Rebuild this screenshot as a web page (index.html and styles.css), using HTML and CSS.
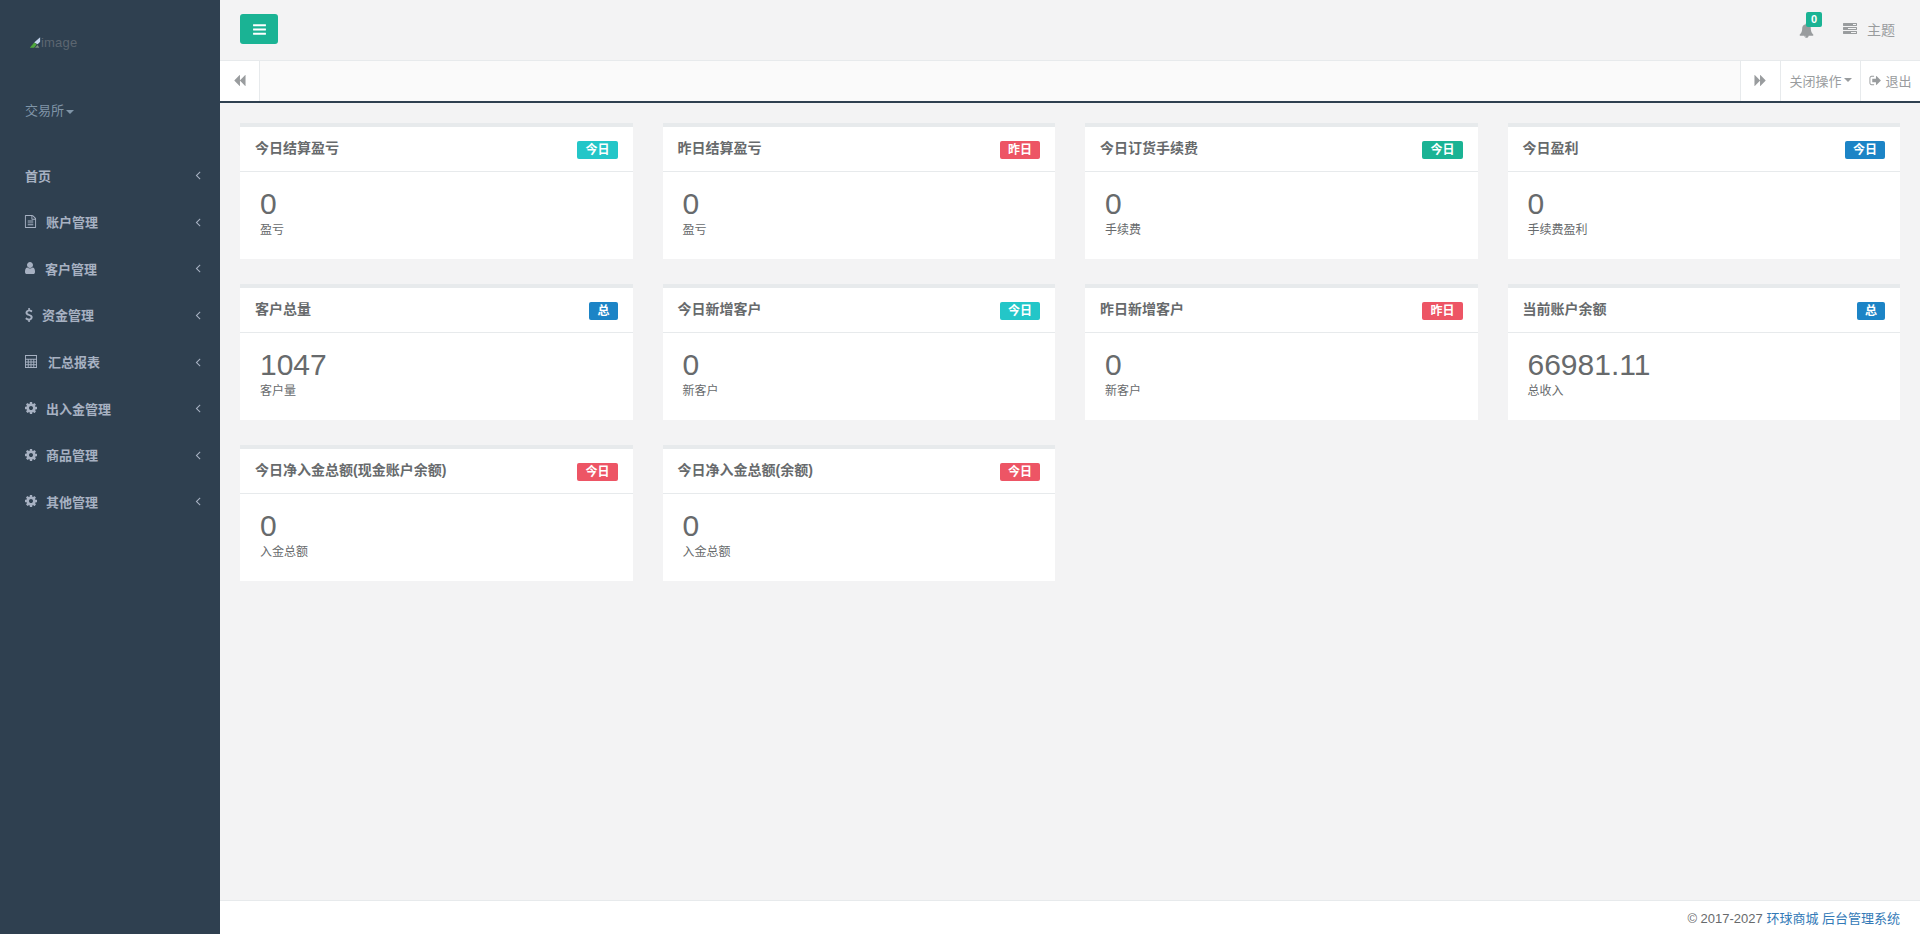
FILE: index.html
```html
<!DOCTYPE html>
<html lang="zh-CN">
<head>
<meta charset="utf-8">
<title>后台管理系统</title>
<link rel="stylesheet" href="styles.css">
</head>
<body>
<svg class="defs" xmlns="http://www.w3.org/2000/svg">
<symbol id="i-bars" viewBox="0 0 1792 1792"><path d="M1664 1344v128q0 26-19 45t-45 19h-1408q-26 0-45-19t-19-45v-128q0-26 19-45t45-19h1408q26 0 45 19t19 45zm0-512v128q0 26-19 45t-45 19h-1408q-26 0-45-19t-19-45v-128q0-26 19-45t45-19h1408q26 0 45 19t19 45zm0-512v128q0 26-19 45t-45 19h-1408q-26 0-45-19t-19-45v-128q0-26 19-45t45-19h1408q26 0 45 19t19 45z"/></symbol>
<symbol id="i-user" viewBox="0 0 1792 1792"><path d="M1536 1399q0 109-62.5 187t-150.5 78h-854q-88 0-150.5-78t-62.5-187q0-85 8.5-160.5t31.5-152 58.5-131 94-89 134.5-34.5q131 128 313 128t313-128q76 0 134.5 34.5t94 89 58.5 131 31.5 152 8.5 160.5zm-256-887q0 159-112.5 271.5t-271.5 112.5-271.5-112.5-112.5-271.5 112.5-271.5 271.5-112.5 271.5 112.5 112.5 271.5z"/></symbol>
<symbol id="i-bell" viewBox="0 0 1792 1792"><path d="M912 1696q0-16-16-16-59 0-101.5-42.5t-42.5-101.5q0-16-16-16t-16 16q0 73 51.5 124.5t124.5 51.5q16 0 16-16zm816-288q0 52-38 90t-90 38h-448q0 106-75 181t-181 75-181-75-75-181h-448q-52 0-90-38t-38-90q50-42 91-88t85-119.5 74.5-158.5 50-206 19.5-260q0-152 117-282.5t307-158.5q-8-19-8-39 0-40 28-68t68-28 68 28 28 68q0 20-8 39 190 28 307 158.5t117 282.5q0 139 19.5 260t50 206 74.5 158.5 85 119.5 91 88z"/></symbol>
<symbol id="i-cog" viewBox="0 0 1792 1792"><path d="M1152 896q0-106-75-181t-181-75-181 75-75 181 75 181 181 75 181-75 75-181zm512-109v222q0 12-8 23t-20 13l-185 28q-19 54-39 91 35 50 107 138 10 12 10 25t-9 23q-27 37-99 108t-94 71q-12 0-26-9l-138-108q-44 23-91 38-16 136-29 186-7 28-36 28h-222q-14 0-24.5-8.5t-11.5-21.5l-28-184q-49-16-90-37l-141 107q-10 9-25 9-14 0-25-11-126-114-165-168-7-10-7-23 0-12 8-23 15-21 51-66.5t54-70.5q-27-50-41-99l-183-27q-13-2-21-12.5t-8-23.5v-222q0-12 8-23t19-13l186-28q14-46 39-92-40-57-107-138-10-12-10-24 0-10 9-23 26-36 98.5-107.5t94.5-71.5q13 0 26 10l138 107q44-23 91-38 16-136 29-186 7-28 36-28h222q14 0 24.5 8.5t11.5 21.5l28 184q49 16 90 37l142-107q9-9 24-9 13 0 25 10 129 119 165 170 7 8 7 22 0 12-8 23-15 21-51 66.5t-54 70.5q26 50 41 98l183 28q13 2 21 12.5t8 23.5z"/></symbol>
<symbol id="i-angle" viewBox="0 0 1792 1792"><path d="M1203 544q0 13-10 23l-393 393 393 393q10 10 10 23t-10 23l-50 50q-10 10-23 10t-23-10l-466-466q-10-10-10-23t10-23l466-466q10-10 23-10t23 10l50 50q10 10 10 23z"/></symbol>
<symbol id="i-back" viewBox="0 0 1792 1792"><path d="M1683 141q19-19 32-13t13 32v1472q0 26-13 32t-32-13l-710-710q-9-9-13-19v710q0 26-13 32t-32-13l-710-710q-19-19-19-45t19-45l710-710q19-19 32-13t13 32v710q4-10 13-19z"/></symbol>
<symbol id="i-forward" viewBox="0 0 1792 1792"><path d="M109 1651q-19 19-32 13t-13-32v-1472q0-26 13-32t32 13l710 710q9 9 13 19v-710q0-26 13-32t32 13l710 710q19 19 19 45t-19 45l-710 710q-19 19-32 13t-13-32v-710q-4 10-13 19z"/></symbol>
<symbol id="i-signout" viewBox="0 0 1792 1792"><path d="M704 1440q0 4 1 20t.5 26.5-3 23.5-10 19.5-20.5 6.5h-320q-119 0-203.5-84.5t-84.5-203.5v-704q0-119 84.5-203.5t203.5-84.5h320q13 0 22.5 9.5t9.5 22.5q0 4 1 20t.5 26.5-3 23.5-10 19.5-20.5 6.5h-320q-66 0-113 47t-47 113v704q0 66 47 113t113 47h312l11.5 1 11.5 3 8 5.5 7 9 2 13.5zm928-544q0 26-19 45l-544 544q-19 19-45 19t-45-19-19-45v-288h-448q-26 0-45-19t-19-45v-384q0-26 19-45t45-19h448v-288q0-26 19-45t45-19 45 19l544 544q19 19 19 45z"/></symbol>
<symbol id="i-tasks" viewBox="0 0 1792 1792"><path d="M1024 1408h640v-128h-640v128zm-384-512h1024v-128h-1024v128zm640-512h384v-128h-384v128zm512 832v256q0 26-19 45t-45 19h-1664q-26 0-45-19t-19-45v-256q0-26 19-45t45-19h1664q26 0 45 19t19 45zm0-512v256q0 26-19 45t-45 19h-1664q-26 0-45-19t-19-45v-256q0-26 19-45t45-19h1664q26 0 45 19t19 45zm0-512v256q0 26-19 45t-45 19h-1664q-26 0-45-19t-19-45v-256q0-26 19-45t45-19h1664q26 0 45 19t19 45z"/></symbol>
<symbol id="i-usd" viewBox="0 0 1792 1792"><path d="M1362 1185q0 153-99.5 263.5t-258.5 136.5v175q0 14-9 23t-23 9h-135q-13 0-22.5-9.5t-9.5-22.5v-175q-66-9-127.5-31t-101.5-44.5-74-48-46.5-37.5-17.5-18q-17-21-2-41l103-135q7-10 23-12 15-2 24 9l2 2q113 99 243 125 37 8 74 8 81 0 142.5-43t61.5-122q0-28-15-53t-33.5-42-58.5-37.5-66-32-80-32.5q-39-16-61.5-25t-61.5-26.5-62.5-31-56.5-35.5-53.5-42.5-43.5-49-35.5-58-21-66.5-8.5-78q0-138 98-242t255-134v-180q0-13 9.5-22.5t22.5-9.5h135q14 0 23 9t9 23v176q57 6 110.5 23t87 33.5 63.5 37.5 39 29 15 14q17 18 5 38l-81 146q-8 15-23 16-14 3-27-7-3-3-14.5-12t-39-26.5-58.5-32-74.5-26-85.5-11.5q-95 0-155 43t-60 111q0 26 8.5 48t29.5 41.5 39.5 33 56 31 60.5 27 70 27.5q53 20 81 31.5t76 35 75.5 42.5 62 50 53 63.5 31.5 76.5 13 94z"/></symbol>
<symbol id="i-file" viewBox="0 0 1792 1792"><path d="M1596 380q28 28 48 76t20 88v1152q0 40-28 68t-68 28h-1344q-40 0-68-28t-28-68v-1600q0-40 28-68t68-28h896q40 0 88 20t76 48zm-444-244v376h376q-10-29-22-41l-313-313q-12-12-41-22zm384 1528v-1024h-416q-40 0-68-28t-28-68v-416h-768v1536h1280zm-1024-864q0-14 9-23t23-9h704q14 0 23 9t9 23v64q0 14-9 23t-23 9h-704q-14 0-23-9t-9-23v-64zm736 224q14 0 23 9t9 23v64q0 14-9 23t-23 9h-704q-14 0-23-9t-9-23v-64q0-14 9-23t23-9h704zm0 256q14 0 23 9t9 23v64q0 14-9 23t-23 9h-704q-14 0-23-9t-9-23v-64q0-14 9-23t23-9h704z"/></symbol>
<symbol id="i-calc" viewBox="0 0 13 14"><path fill-rule="evenodd" d="M0 0h13v14H0zM1 1v3h11V1zM1 5v2h2V5zm3 0v2h2V5zm3 0v2h2V5zm3 0v2h2V5zM1 8v2h2V8zm3 0v2h2V8zm3 0v2h2V8zm3 0v2h2V8zM1 11v2h2v-2zm3 0v2h2v-2zm3 0v2h2v-2zm3 0v2h2v-2z"/></symbol>
</svg>

<div class="app">
  <aside class="sidebar">
    <div class="logo">
      <svg class="broken" viewBox="0 0 14 14" xmlns="http://www.w3.org/2000/svg"><path fill="#c8d6ee" d="M13 1v5L10 9 6 7z"/><path fill="#4fa83d" d="M1 13l5-6 3 2-3 4z"/><path fill="#7d8f7e" d="M7 13l3-3 2 3z"/></svg><span class="logo-alt">image</span>
    </div>
    <div class="profile">交易所<span class="caret"></span></div>
    <nav class="menu">
      <a class="menu-item"><span class="menu-label">首页</span><svg class="chev"><use href="#i-angle"/></svg></a>
      <a class="menu-item"><span class="menu-label"><svg class="ico ico-file"><use href="#i-file"/></svg>账户管理</span><svg class="chev"><use href="#i-angle"/></svg></a>
      <a class="menu-item"><span class="menu-label"><svg class="ico ico-user"><use href="#i-user"/></svg>客户管理</span><svg class="chev"><use href="#i-angle"/></svg></a>
      <a class="menu-item"><span class="menu-label"><svg class="ico ico-usd"><use href="#i-usd"/></svg>资金管理</span><svg class="chev"><use href="#i-angle"/></svg></a>
      <a class="menu-item"><span class="menu-label"><svg class="ico ico-calc"><use href="#i-calc"/></svg>汇总报表</span><svg class="chev"><use href="#i-angle"/></svg></a>
      <a class="menu-item"><span class="menu-label"><svg class="ico ico-cog"><use href="#i-cog"/></svg>出入金管理</span><svg class="chev"><use href="#i-angle"/></svg></a>
      <a class="menu-item"><span class="menu-label"><svg class="ico ico-cog"><use href="#i-cog"/></svg>商品管理</span><svg class="chev"><use href="#i-angle"/></svg></a>
      <a class="menu-item"><span class="menu-label"><svg class="ico ico-cog"><use href="#i-cog"/></svg>其他管理</span><svg class="chev"><use href="#i-angle"/></svg></a>
    </nav>
  </aside>

  <main class="main">
    <header class="topbar">
      <button class="toggle"><svg class="toggle-ico"><use href="#i-bars"/></svg></button>
      <div class="top-right">
        <span class="bell"><svg class="bell-ico"><use href="#i-bell"/></svg><span class="bell-badge">0</span></span>
        <span class="theme"><svg class="tasks-ico"><use href="#i-tasks"/></svg>主题</span>
      </div>
    </header>

    <div class="tabs">
      <button class="tab-btn tab-left"><svg class="tab-ico"><use href="#i-back"/></svg></button>
      <div class="tab-fill"></div>
      <button class="tab-btn tab-fwd"><svg class="tab-ico"><use href="#i-forward"/></svg></button>
      <button class="tab-btn tab-close">关闭操作<span class="caret caret-tab"></span></button>
      <button class="tab-btn tab-exit"><svg class="exit-ico"><use href="#i-signout"/></svg>退出</button>
    </div>

    <section class="content">
      <article class="card"><div class="card-head"><h5>今日结算盈亏</h5><span class="tag tag-info">今日</span></div><div class="card-body"><div class="value">0</div><small>盈亏</small></div></article>
      <article class="card"><div class="card-head"><h5>昨日结算盈亏</h5><span class="tag tag-danger">昨日</span></div><div class="card-body"><div class="value">0</div><small>盈亏</small></div></article>
      <article class="card"><div class="card-head"><h5>今日订货手续费</h5><span class="tag tag-primary">今日</span></div><div class="card-body"><div class="value">0</div><small>手续费</small></div></article>
      <article class="card"><div class="card-head"><h5>今日盈利</h5><span class="tag tag-success">今日</span></div><div class="card-body"><div class="value">0</div><small>手续费盈利</small></div></article>

      <article class="card"><div class="card-head"><h5>客户总量</h5><span class="tag tag-success">总</span></div><div class="card-body"><div class="value">1047</div><small>客户量</small></div></article>
      <article class="card"><div class="card-head"><h5>今日新增客户</h5><span class="tag tag-info">今日</span></div><div class="card-body"><div class="value">0</div><small>新客户</small></div></article>
      <article class="card"><div class="card-head"><h5>昨日新增客户</h5><span class="tag tag-danger">昨日</span></div><div class="card-body"><div class="value">0</div><small>新客户</small></div></article>
      <article class="card"><div class="card-head"><h5>当前账户余额</h5><span class="tag tag-success">总</span></div><div class="card-body"><div class="value">66981.11</div><small>总收入</small></div></article>

      <article class="card"><div class="card-head"><h5>今日净入金总额(现金账户余额)</h5><span class="tag tag-danger">今日</span></div><div class="card-body"><div class="value">0</div><small>入金总额</small></div></article>
      <article class="card"><div class="card-head"><h5>今日净入金总额(余额)</h5><span class="tag tag-danger">今日</span></div><div class="card-body"><div class="value">0</div><small>入金总额</small></div></article>
    </section>

    <footer class="footer">© 2017-2027 <a class="footer-link">环球商城 后台管理系统</a></footer>
  </main>
</div>
</body>
</html>
```

FILE: styles.css
```css
* { box-sizing: border-box; }
html, body { margin: 0; height: 100%; overflow: hidden; }
body {
  font-family: "Liberation Sans", "Noto Sans CJK SC", sans-serif;
  font-size: 13px;
  color: #676a6c;
  background: #f3f3f4;
}
.defs { display: none; }
svg { fill: currentColor; }
.app { display: flex; height: 934px; }

/* sidebar */
.sidebar { width: 220px; flex: none; background: #2f4050; }
.logo { display: flex; align-items: center; height: 18px; margin: 33px 0 0 29px; }
.broken { width: 12px; height: 13px; flex: none; }
.logo-alt { font-size: 13px; color: #5c6670; letter-spacing: .2px; }
.profile { margin: 51px 0 0 25px; height: 18px; line-height: 18px; color: #8095a8; }
.caret {
  display: inline-block; width: 0; height: 0; margin-left: 2px; vertical-align: middle;
  border-top: 4px solid; border-left: 4px solid transparent; border-right: 4px solid transparent;
}
.menu { margin-top: 32px; }
.menu-item {
  display: flex; align-items: center; justify-content: space-between;
  height: 46.57px; padding: 0 20px 0 25px;
  color: #a7b1c2; font-weight: 700; font-size: 13px;
}
.menu-label { display: flex; align-items: center; }
.chev { width: 14px; height: 14px; margin-right: -5px; }
.ico { flex: none; height: 14px; }
.ico-file { width: 13px; height: 13px; margin-left: -1px; margin-right: 9px; }
.ico-user { width: 14px; margin-left: -2px; margin-right: 8px; }
.ico-usd { width: 14px; margin-left: -3px; margin-right: 6px; }
.ico-calc { width: 12px; height: 13px; margin-right: 11px; }
.ico-cog { width: 14px; margin-left: -1px; margin-right: 8px; }

/* main */
.main { flex: 1; min-width: 0; display: flex; flex-direction: column; }
.topbar {
  height: 61px; flex: none; display: flex; align-items: flex-start; justify-content: space-between;
  padding: 14px 25px 0 20px; border-bottom: 1px solid #e7eaec;
}
.toggle {
  width: 38px; height: 30px; border: 0; border-radius: 3px; background: #1ab394; color: #fff;
  padding: 0; display: flex; align-items: center; justify-content: center;
}
.toggle-ico { width: 15px; height: 15px; }
.top-right { display: flex; align-items: flex-start; color: #999c9e; }
.bell { position: relative; display: block; width: 16px; height: 16px; margin: 9px 28px 0 1px; }
.bell-ico { display: block; width: 15px; height: 15px; }
.bell-badge {
  position: absolute; left: 7px; top: -11px; width: 16px; height: 15px; border-radius: 2px;
  background: #1ab394; color: #fff; font-size: 11px; font-weight: 700; line-height: 15px; text-align: center;
}
.theme { display: flex; align-items: center; font-size: 14px; height: 20px; margin-top: 5px; }
.tasks-ico { width: 14px; height: 14px; margin-right: 10px; }

/* tabs */
.tabs {
  height: 42px; flex: none; display: flex; background: #fafafa; border-bottom: 2px solid #2f4050;
}
.tab-fill { flex: 1; }
.tab-btn {
  height: 40px; padding: 0 0 2px; border: 0; background: #fff; color: #999c9e; font: inherit; font-size: 13px;
  display: flex; align-items: center; justify-content: center;
  border-left: 1px solid #e7eaec;
}
.tab-left { width: 40px; border-left: 0; border-right: 1px solid #e7eaec; }
.tab-fwd { width: 40px; }
.tab-close { width: 80px; }
.tab-exit { width: 60px; }
.tab-ico { width: 13px; height: 13px; }
.caret-tab { margin-left: 2px; }
.exit-ico { width: 13px; height: 13px; margin-right: 3px; }

/* content */
.content {
  flex: 1; min-height: 0; display: grid; grid-template-columns: repeat(4, 1fr);
  grid-auto-rows: 136px; gap: 25px 30px; padding: 20px 20px 0;
}
.card { background: #fff; border-top: 4px solid #e7eaec; }
.card-head {
  height: 45px; padding: 11px 15px 0; display: flex; justify-content: space-between;
  border-bottom: 1px solid #e7eaec;
}
.card-head h5 { margin: 0; font-size: 14px; line-height: 20px; font-weight: 700; color: #676a6c; }
.tag {
  height: 18px; margin-top: 3px; padding: 0 8px; border-radius: 2px; color: #fff;
  font-size: 12px; font-weight: 700; line-height: 18px;
}
.tag-info { background: #23c6c8; }
.tag-danger { background: #ed5565; }
.tag-primary { background: #1ab394; }
.tag-success { background: #1c84c6; }
.card-body { padding: 15px 20px 0; }
.value { font-size: 30px; line-height: 34px; color: #676a6c; }
small { display: block; margin-top: 1px; font-size: 12px; line-height: 17px; color: #676a6c; }

/* footer */
.footer {
  height: 34px; flex: none; background: #fff; border-top: 1px solid #e7eaec;
  padding: 9px 20px 0; line-height: 18px; text-align: right; font-size: 13px; color: #676a6c;
}
.footer-link { color: #337ab7; }
```
